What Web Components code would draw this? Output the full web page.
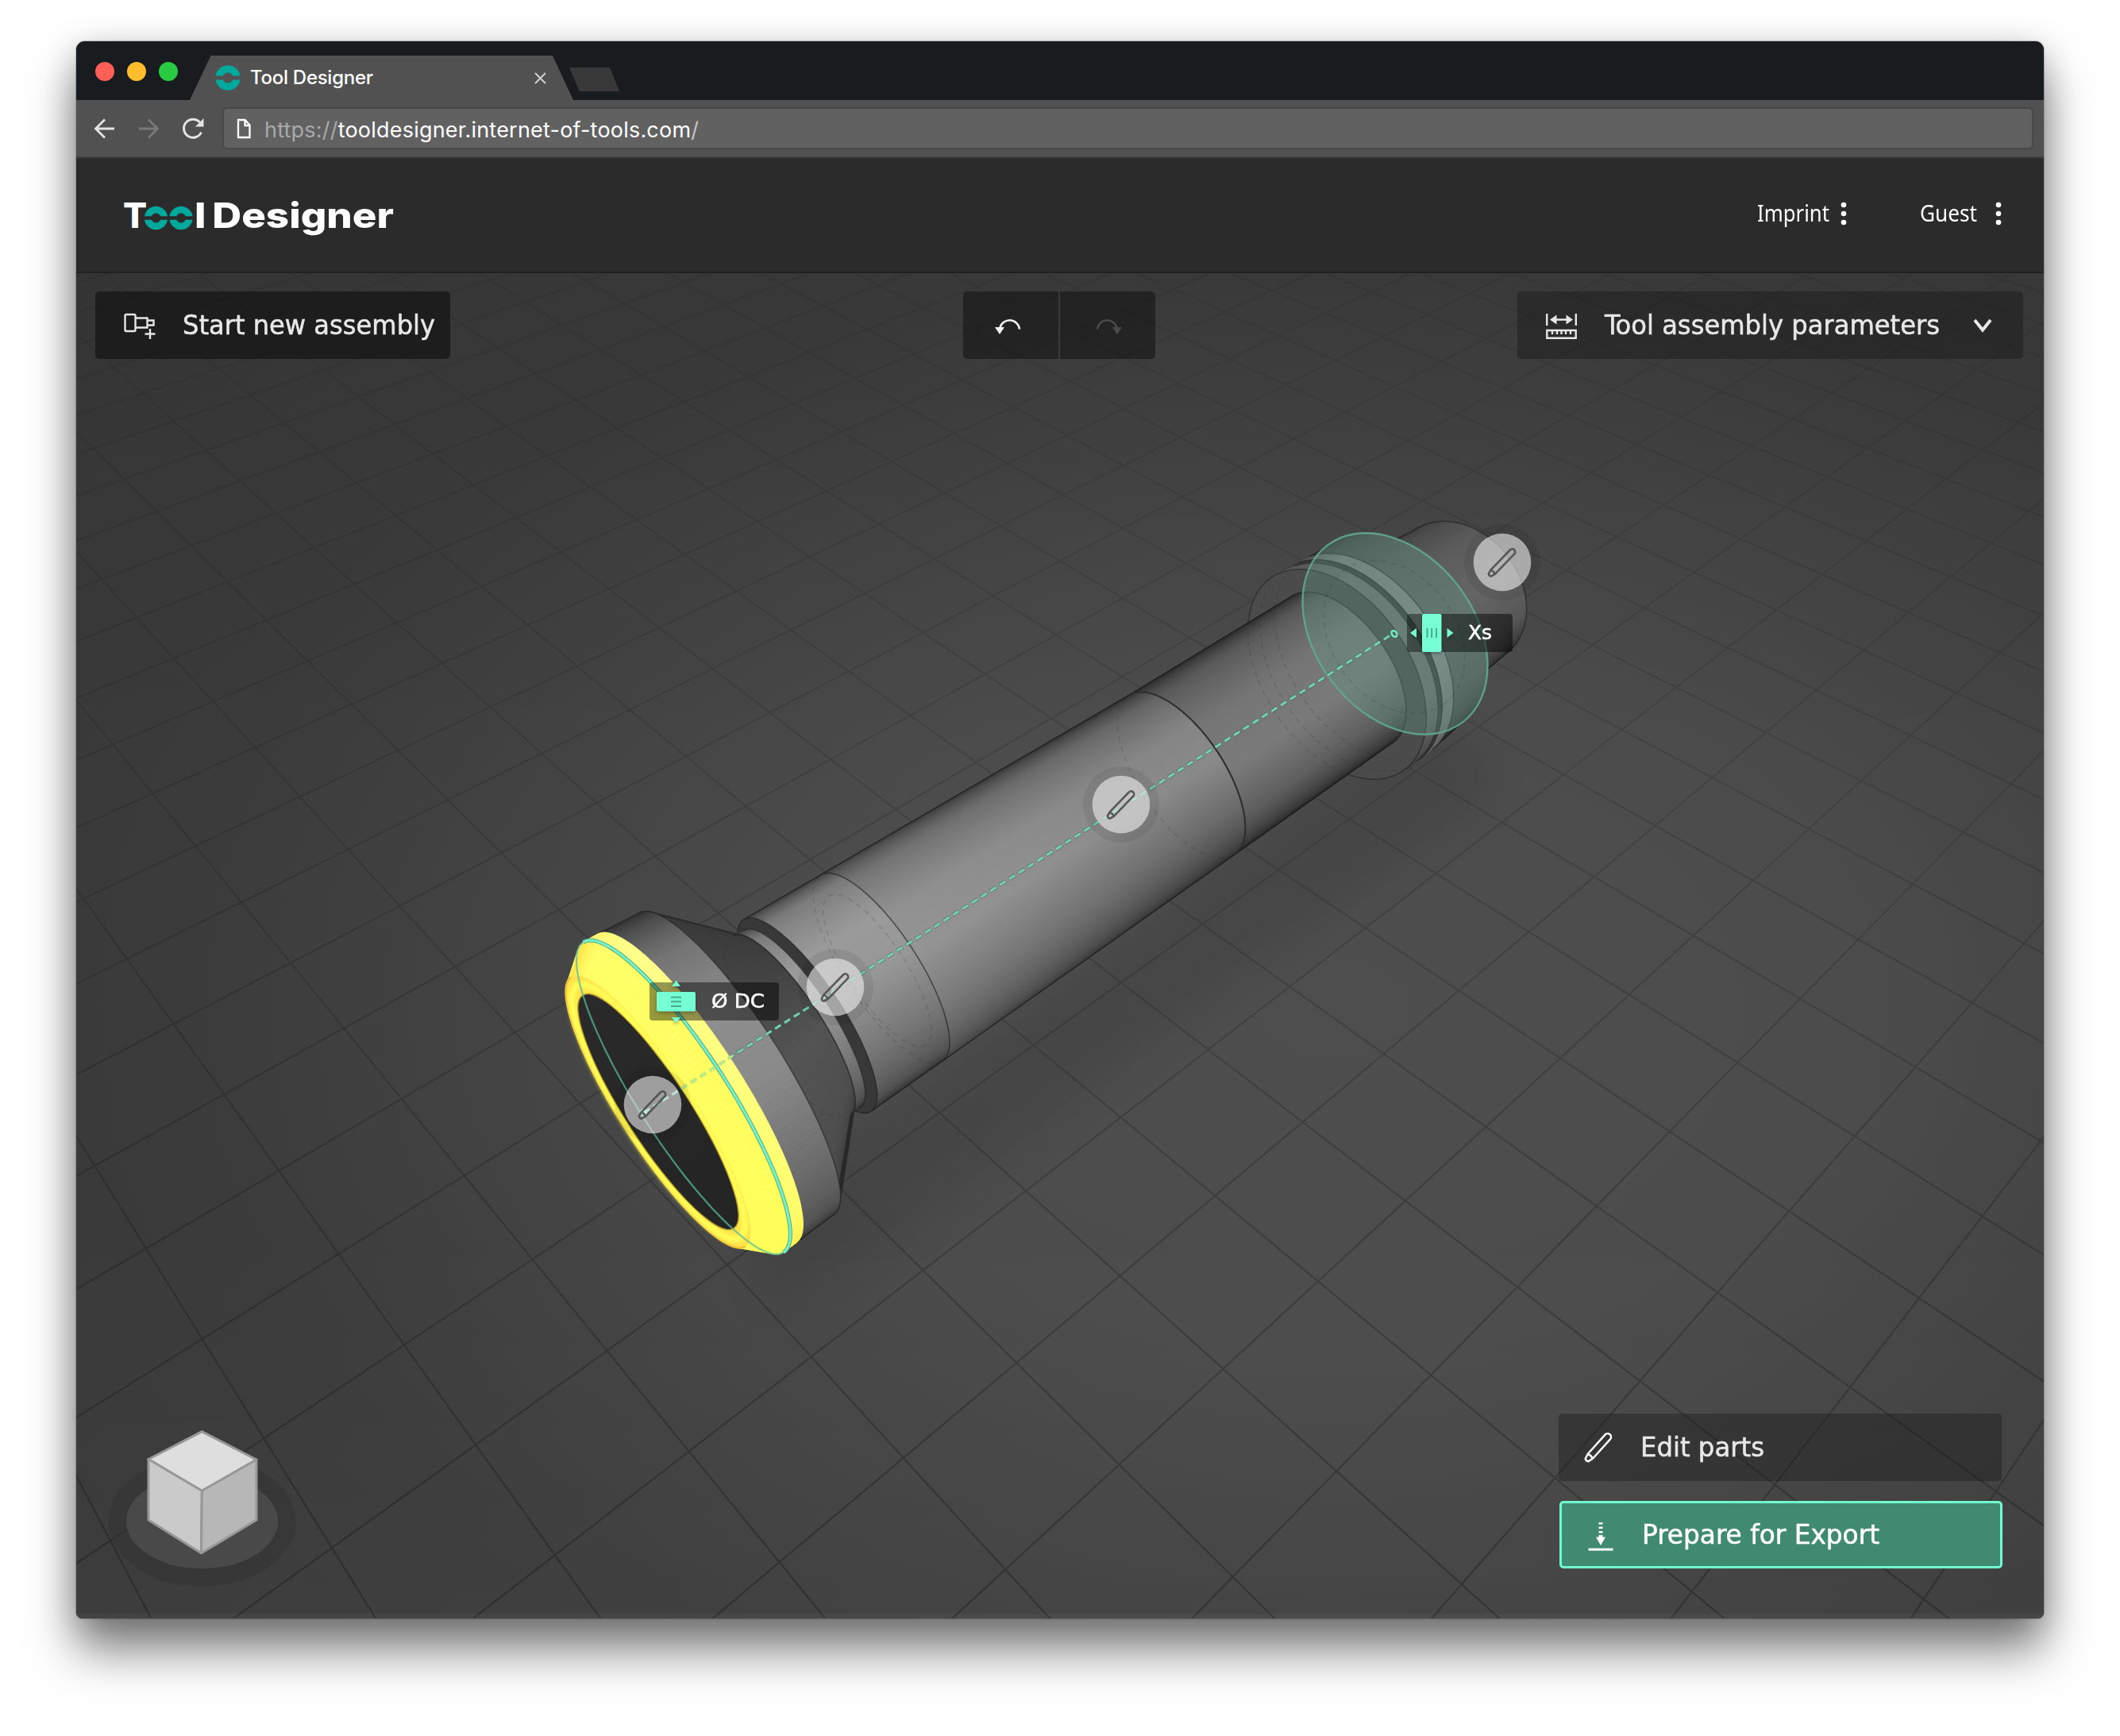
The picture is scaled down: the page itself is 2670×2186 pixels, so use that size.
<!DOCTYPE html>
<html lang="en">
<head>
<meta charset="utf-8">
<title>Tool Designer</title>
<style>
html,body{margin:0;height:100%}
body{background:#fff;font-family:"Noto Sans","Open Sans",sans-serif;color:#fff;overflow:hidden}
app-window{width:2478px;height:1986px;margin:52px 0 0 96px}
</style>
</head>
<body>
<app-window>
  <tab-strip slot="chrome"></tab-strip>
  <address-bar slot="chrome"></address-bar>
  <app-header slot="page">
    <menu-link gap="14" w="91">Imprint</menu-link>
    <menu-link gap="23" w="72">Guest</menu-link>
  </app-header>
  <tool-viewport slot="page">
    <tool-button slot="start" icon="assembly" w="318" style="--w:447px;--bg:rgba(10,10,10,.55);--pl:36px;--gap:34px">Start new assembly</tool-button>
    <history-buttons slot="middle"></history-buttons>
    <tool-button slot="end" icon="params" w="422" chevron style="--w:637px;--bg:rgba(18,18,18,.38);--pl:36px;--gap:35px">Tool assembly parameters</tool-button>
    <tool-button slot="actions" icon="pencil" w="156" style="--w:558px;--bg:rgba(24,24,24,.38);--pl:31px;--gap:32px">Edit parts</tool-button>
    <tool-button slot="actions" icon="export" w="299" primary style="--w:558px;--bg:#3f8a71;--pl:32px;--gap:32px">Prepare for Export</tool-button>
    <view-cube slot="cube"></view-cube>
    <part-marker slot="free" x="1892" y="708"></part-marker>
    <part-marker slot="free" x="1412" y="1013"></part-marker>
    <part-marker slot="free" x="1051.5" y="1243"></part-marker>
    <part-marker slot="free" x="822" y="1391"></part-marker>
    <drag-chip slot="free" x="818" y="1237" dir="v" w="67">Ø DC</drag-chip>
    <drag-chip slot="free" x="1772" y="773" dir="h" w="30">Xs</drag-chip>
  </tool-viewport>
</app-window>

<script>
const define = (name, html, setup) => customElements.define(name, class extends HTMLElement {
  constructor() {
    super();
    this.attachShadow({ mode: 'open' }).innerHTML = html;
  }
  connectedCallback() { if (setup) setup(this, this.shadowRoot); }
});

/* Fits a single line of text to a given width, by tracking or (with "scale") by widening the glyphs. */
define('fit-label', `<style>:host{display:inline-block;white-space:nowrap;line-height:1}span{display:inline-block}</style><span><slot></slot></span>`,
  (el, root) => {
    const span = root.querySelector('span');
    const target = +el.getAttribute('w');
    const width = span.getBoundingClientRect().width;
    if (el.hasAttribute('scale')) {
      span.style.transformOrigin = '0 50%';
      span.style.transform = `scaleX(${(target / width).toFixed(4)})`;
      el.style.width = target + 'px';
      return;
    }
    const n = el.textContent.trim().length;
    const delta = (target - width) / (n - 1);
    span.style.letterSpacing = delta.toFixed(3) + 'px';
    span.style.marginRight = (-delta).toFixed(3) + 'px';
  });

const makeLabel = el => {
  const label = document.createElement('fit-label');
  label.setAttribute('w', el.getAttribute('w'));
  label.setAttribute('scale', '');
  label.textContent = el.textContent.trim();
  return label;
};

/* Two half rings split by a horizontal gap. */
const ringGlyph = (cx, cy, r, hole, gap) => {
  const a = Math.sqrt(r * r - gap * gap), b = Math.sqrt(hole * hole - gap * gap);
  return `<path fill="#00a99b" d="M${cx - a} ${cy - gap}A${r} ${r} 0 0 1 ${cx + a} ${cy - gap}H${cx + b}A${hole} ${hole} 0 0 0 ${cx - b} ${cy - gap}Z
  M${cx - a} ${cy + gap}A${r} ${r} 0 0 0 ${cx + a} ${cy + gap}H${cx + b}A${hole} ${hole} 0 0 1 ${cx - b} ${cy + gap}Z"/>`;
};

define('app-window', `<style>
:host{display:flex;flex-direction:column;border-radius:11px 11px 8px 8px;box-shadow:0 40px 60px rgba(0,0,0,.5),0 6px 40px rgba(0,0,0,.18),0 0 2px rgba(0,0,0,.6)}
main{display:flex;flex-direction:column;flex:1;border-radius:11px 11px 8px 8px;overflow:hidden;background:#2b2b2b}
</style><main><slot name="chrome"></slot><slot name="page"></slot></main>`);

define('tab-strip', `<style>
:host{display:flex;height:74px;background:#181c1f;font:500 24px Inter,Roboto,sans-serif;color:#fff}
.lights{display:flex;gap:16px;padding:26px 0 0 24px;width:119px}
.lights i{width:24px;height:24px;border-radius:50%}
.tab{display:flex;align-items:center;width:483px;height:56px;margin-top:18px;box-sizing:border-box;padding-left:32px;background:#515151;clip-path:polygon(5.5% 0,94.6% 0,100% 100%,0 100%)}
.tab svg{flex:none}
fit-label{margin-left:12px;flex:1}
.x{margin-right:34px}
.new{width:63px;height:30px;margin:33px 0 0 -5px;background:#383838;clip-path:polygon(0 0,81% 0,100% 100%,20% 100%)}
</style>
<div class="lights"><i style="background:#ff5f57"></i><i style="background:#ffbd2e"></i><i style="background:#28ca42"></i></div>
<div class="tab"><svg width="32" height="34" viewBox="0 0 32 34">${ringGlyph(16, 17, 15.8, 6.5, 2.6)}</svg><fit-label w="155">Tool Designer</fit-label>
<svg class="x" width="15" height="15" viewBox="0 0 15 15"><path d="M1 1L14 14M14 1L1 14" stroke="#d0d0d0" stroke-width="2"/></svg></div>
<div class="new"></div>`);

define('address-bar', `<style>
:host{display:flex;align-items:center;height:73px;background:#515151;box-sizing:border-box;padding:0 13px 0 22px;border-bottom:2px solid #3f3f3f;font:400 27px Inter,Roboto,sans-serif}
.nav{display:flex;gap:28.5px;width:162px;align-items:center}
.field{flex:1;height:53px;box-sizing:border-box;border:2px solid #474747;border-radius:6px;background:#616161;display:flex;align-items:center;padding-left:16px;gap:17px;color:#fff}
.dim{color:#a9a9a9}
fit-label{margin-top:3px}
</style>
<div class="nav">
<svg width="27" height="28" viewBox="0 0 27 28" fill="none" stroke="#e4e4e4" stroke-width="2.8"><path d="M26 14H3M14 2.5L2.5 14L14 25.500"/></svg>
<svg width="27" height="28" viewBox="0 0 27 28" fill="none" stroke="#797979" stroke-width="2.800"><path d="M1 14H24M13 2.500L24.500 14L13 25.500"/></svg>
<svg width="28" height="28" viewBox="0 0 28 28"><path d="M24.500 18.500A11.500 11.500 0 1 1 22.500 6" fill="none" stroke="#e4e4e4" stroke-width="3"/><path d="M27.500 1V11.500H17Z" fill="#e4e4e4"/></svg>
</div>
<div class="field"><svg width="18" height="26" viewBox="0 0 18 26" fill="none" stroke="#fff" stroke-width="2.300"><path d="M2 2H10.500L16.500 8.500V24H2ZM10.500 2V9H16.500"/></svg>
<fit-label w="547"><span class="dim">https://</span>tooldesigner.internet-of-tools.com<span class="dim" style="color:#c4c4c4">/</span></fit-label></div>`);

define('app-header', `<style>
:host{display:flex;height:145px;box-sizing:border-box;background:#2b2b2b;border-bottom:2px solid #202020;justify-content:space-between;padding:0 53px 0 59px}
.logo{display:flex;align-items:center;height:144px;font:800 44.500px Inter,"Open Sans",sans-serif;color:#fff}
.logo svg{margin:7px 2px 0 -3px}
.logo fit-label{word-spacing:-3px}
nav{display:flex;gap:92px;height:139px;align-items:center}
</style>
<div class="logo"><span>T</span><svg width="61" height="31" viewBox="0 0 61 31">${ringGlyph(14.5, 15.500, 14.700, 6, 2.300)}${ringGlyph(46, 15.500, 14.700, 6, 2.300)}</svg><fit-label w="251" scale>l Designer</fit-label></div>
<nav><slot></slot></nav>`);

define('menu-link', `<style>:host{display:flex;align-items:center;font-size:28.500px;color:#fff}</style>
<svg width="8" height="30" viewBox="0 0 8 30" fill="#fff"><circle cx="4" cy="4" r="3.300"/><circle cx="4" cy="15" r="3.300"/><circle cx="4" cy="26" r="3.300"/></svg>`,
  (el, root) => {
    const dots = root.querySelector('svg');
    dots.before(makeLabel(el));
    dots.style.marginLeft = el.getAttribute('gap') + 'px';
  });

const icons = {
  assembly: `<svg width="40" height="34" viewBox="0 0 40 34" fill="none" stroke="#e6e6e6" stroke-width="2.400"><rect x="1.500" y="2" width="13" height="21" rx="1.500"/><path d="M14.500 6.500H29.500V18.500H14.500M29.500 9.500H37.500V15.500H29.500M33 20V33M26.500 26.500H39.500"/></svg>`,
  params: `<svg width="39" height="34" viewBox="0 0 39 34" fill="none" stroke="#e6e6e6" stroke-width="2.400"><path d="M1.200 1V16M37.800 1V16M10 8.500H29"/><path d="M5 8.500L13.500 2.500V14.500ZM34 8.500L25.500 2.500V14.500Z" fill="#e6e6e6" stroke="none"/><path d="M1.300 22H37.700V31.700H1.300ZM8 22V27M14 22V27M19.500 22V27M25 22V27M31 22V27"/></svg>`,
  pencil: `<svg width="40" height="40" viewBox="-20 -20 40 40" fill="none" stroke="#fff" stroke-width="2.500" stroke-linejoin="round"><g transform="translate(-1 -1.500) rotate(-48)"><path d="M-21.500 -2.500L-15 -4.300H17.500A4.300 4.300 0 0 1 17.500 4.300H-15L-21.500 2.500Q-23.500 0 -21.500 -2.500ZM-15 -4.300Q-13.500 0 -15 4.300"/></g></svg>`,
  export: `<svg width="40" height="40" viewBox="0 0 40 40"><g fill="#fff"><path d="M17.500 3h5v2.600h-5zM17.500 8.500h5v2.600h-5zM17.500 14h5v2.600h-5zM17.500 19h5v2.500H26L20 32L14 21.500h3.500z"/><path d="M4.500 38.600v-3h31v3z"/></g></svg>`
};

define('tool-button', `<style>
:host{display:flex;align-items:center;box-sizing:border-box;width:var(--w);height:85px;border-radius:5px;background:var(--bg);padding-left:var(--pl);gap:var(--gap);font:34.500px "DejaVu Sans Condensed","DejaVu Sans","Noto Sans",sans-serif;font-stretch:condensed;color:#e8e8e8;-webkit-text-stroke:.5px currentColor}
:host([primary]){border:3px solid #70fbd0;color:#fff;margin-left:1px;padding-left:29px}
.icon{display:flex;margin-top:2px}
.chev{margin-left:7px}
</style><div class="icon"></div>`,
  (el, root) => {
    root.querySelector('.icon').innerHTML = icons[el.getAttribute('icon')];
    const label = makeLabel(el);
    root.appendChild(label);
    if (el.hasAttribute('chevron')) label.insertAdjacentHTML('afterend', `<svg class="chev" width="24" height="20" viewBox="0 0 24 20"><path d="M2 3L12 15.500L22 3" fill="none" stroke="#e8e8e8" stroke-width="4"/></svg>`);
  });

define('history-buttons', `<style>
:host{display:flex;gap:2px}
div{width:120px;height:85px;background:rgba(12,12,12,.5);display:flex;align-items:center;justify-content:center}
.u{border-radius:5px 0 0 5px}.r{border-radius:0 5px 5px 0}
.u svg{margin-right:7px}.r svg{margin-left:2px}
</style>
<div class="u"><svg width="34" height="22" viewBox="0 0 34 22"><path d="M6.500 13.500A12.500 12.500 0 0 1 31 15.500" fill="none" stroke="#f0f0f0" stroke-width="2.600"/><path d="M0 13H12L6 22Z" fill="#f0f0f0"/></svg></div>
<div class="r"><svg width="34" height="22" viewBox="0 0 34 22"><path d="M27.500 13.500A12.500 12.500 0 0 0 3 15.500" fill="none" stroke="#4a4a4a" stroke-width="2.600"/><path d="M34 13H22L28 22Z" fill="#4a4a4a"/></svg></div>`);

define('view-cube', `<style>:host{display:block}svg{display:block}</style>
<svg width="240" height="220" viewBox="134 1790 240 220">
<ellipse cx="254.500" cy="1915.700" rx="118" ry="82" fill="#323232" opacity=".5"/>
<ellipse cx="254.500" cy="1915.700" rx="95.500" ry="59.500" fill="#494949"/>
<g stroke="#989898" stroke-width="3" stroke-linejoin="round">
<path d="M254.300 1802.700L323 1838L254.300 1877.300L187 1837.500Z" fill="#dedede"/>
<path d="M187 1837.500L254.300 1877.300L253.500 1955.700L187 1914Z" fill="#cacaca"/>
<path d="M323 1838L254.300 1877.300L253.500 1955.700L323 1914Z" fill="#b7b7b7"/></g></svg>`);

const ORIGIN = { x: 96, y: 344 };

define('part-marker', `<style>:host{display:block;position:absolute;width:96px;height:96px}svg{display:block}</style>
<svg width="96" height="96" viewBox="-48 -48 96 96"><circle r="48" fill="rgba(0,0,0,.07)"/><circle r="36.300" fill="rgba(240,240,240,.6)"/>
<g transform="rotate(-46)" fill="none" stroke="#4c4c4c" stroke-opacity=".9" stroke-width="2.600" stroke-linejoin="round"><path d="M-22.500 -2.200L-17 -3.700H18A3.700 3.700 0 0 1 18 3.700H-17L-22.500 2.200Q-24 0 -22.500 -2.200ZM-17 -3.700Q-15.500 0 -17 3.700"/></g></svg>`,
  el => {
    el.style.left = (el.getAttribute('x') - ORIGIN.x - 48) + 'px';
    el.style.top = (el.getAttribute('y') - ORIGIN.y - 48) + 'px';
  });

define('drag-chip', `<style>
:host{display:flex;position:absolute;align-items:center;height:48px;border-radius:4px;background:linear-gradient(90deg,rgba(0,0,0,.4),rgba(0,0,0,.5));font:25.500px "DejaVu Sans Condensed","DejaVu Sans","Noto Sans",sans-serif;font-stretch:condensed;color:#fff;-webkit-text-stroke:.5px #fff}
svg{display:block;flex:none;overflow:visible;-webkit-text-stroke:0}
:host([dir=v]){width:163px}:host([dir=v]) svg{margin:0 20px 0 9px}
:host([dir=h]){width:133px}:host([dir=h]) svg{margin:0 19px 0 4px}
.h,.v{filter:drop-shadow(0 2px 2px rgba(0,0,0,.3))}
:host([dir=v]) .h,:host([dir=h]) .v{display:none}
</style>
<svg class="v" width="49" height="48" viewBox="0 0 49 48"><g fill="#76ffd3"><rect y="12" width="49" height="24.500" rx="2"/><path d="M24.500 -2.500L30 5H19ZM24.500 51.500L30 44H19Z"/></g><path d="M18 18.700H31M18 24.300H31M18 30H31" stroke="#45a98b" stroke-width="2"/></svg>
<svg class="h" width="54" height="48" viewBox="0 0 54 48"><g fill="#76ffd3"><rect x="15" width="24.500" height="48" rx="2"/><path d="M0 24L8 18V30ZM54.500 24L46.500 18V30Z"/></g><path d="M21.500 18V30M27.200 18V30M33 18V30" stroke="#45a98b" stroke-width="2"/></svg>`,
  (el, root) => {
    el.style.left = (el.getAttribute('x') - ORIGIN.x) + 'px';
    el.style.top = (el.getAttribute('y') - ORIGIN.y) + 'px';
    root.appendChild(makeLabel(el));
  });

/* ---- 3D scene ---- */
const rim = (cx, cy, rx, ry, rot) => ({ cx, cy, rx, ry, rot });
const at = (e, deg) => {
  const r = e.rot * Math.PI / 180, t = deg * Math.PI / 180;
  const a = e.rx * Math.cos(t), b = e.ry * Math.sin(t);
  return [e.cx + a * Math.cos(r) - b * Math.sin(r), e.cy + a * Math.sin(r) + b * Math.cos(r)].map(v => +v.toFixed(1));
};
const pick = (stops, t) => {
  let i = 1;
  while (i < stops.length - 1 && stops[i][0] < t) i++;
  const [t0, c0] = stops[i - 1], [t1, c1] = stops[i];
  const k = Math.min(1, Math.max(0, (t - t0) / (t1 - t0)));
  const mix = [0, 1, 2].map(n => Math.round(c0[n] + (c1[n] - c0[n]) * k));
  return `rgb(${mix})`;
};
const grey = pairs => pairs.map(([t, v]) => [t, [v, v, v]]);
/* Band between two rims; the hidden half is painted before the visible one. */
const loft = (a, b, stops) => {
  let out = '';
  const quad = (d0, d1, c) => {
    const p = [at(a, d0), at(a, d1), at(b, d1), at(b, d0)];
    out += `<path d="M${p.join('L')}Z" fill="${c}" stroke="${c}" stroke-width=".8"/>`;
  };
  for (let d = 0; d < 180; d += 6) quad(d, d + 6, pick(stops, 1 - d / 180));
  for (let d = 180; d < 360; d += 2) quad(d, d + 2, pick(stops, (d - 179) / 180));
  return out;
};
const ell = (e, attrs) => `<ellipse rx="${e.rx}" ry="${e.ry}" transform="translate(${e.cx} ${e.cy}) rotate(${e.rot})" ${attrs}/>`;
const arc = (e, d0, d1, attrs) => {
  const pts = [];
  for (let d = d0; d <= d1; d += 3) pts.push(at(e, d));
  return `<path d="M${pts.join('L')}" fill="none" ${attrs}/>`;
};
const edge = (a, b, deg, attrs = 'stroke="#1c1c1c" stroke-opacity=".5" stroke-width="1.600"') => `<path d="M${at(a, deg)}L${at(b, deg)}" ${attrs}/>`;

function gridLines() {
  let d = '';
  const y0 = 340, y1 = 2040;
  const family = (vx, vy, base, step) => {
    for (let i = -30; i < 34; i++) {
      const bx = base + step * i;
      const f = y => vx + (bx - vx) * (y - vy) / (2032 - vy);
      d += `M${f(y0).toFixed(1)} ${y0}L${f(y1).toFixed(1)} ${y1}`;
    }
  };
  family(-1334, -872, 187.1, 282.45);
  family(4356, -871, 302.2, 301.2);
  return d;
}

function toolModel() {
  const hole = rim(829, 1400, 174.3, 39.6, 57.05), lip = rim(829, 1400, 202, 46.5, 57.1),
    dc = rim(860.7, 1381.7, 232.5, 56.2, 57.15), y2 = rim(877.7, 1370.5, 231, 56, 57.15),
    g1 = rim(928, 1339.3, 225.7, 54, 57.1), c1 = rim(996.7, 1291.3, 135, 37, 56.6),
    k0 = rim(1010, 1283, 133.5, 37, 56.6), k1 = rim(1016.7, 1278.7, 145, 42.7, 56.3),
    j1 = rim(1110, 1219, 140, 46, 56.7), e2 = rim(1488, 976, 120.4, 54, 56.4),
    e3 = rim(1690, 843.3, 112, 59.7, 54.7), f1 = rim(1684, 849, 147.3, 91.8, 55.8),
    r2 = rim(1699, 840, 146, 92, 55.5), r3 = rim(1704, 836, 146, 92, 55.5), r4 = rim(1718, 827, 145, 93, 55),
    m2 = rim(1762, 796, 138, 93, 53.5), t0 = rim(1745, 807, 110, 78, 54), t1 = rim(1838, 746, 97, 76, 52);
  const body = grey([[0, 34], [.07, 56], [.2, 102], [.38, 134], [.52, 138], [.7, 108], [.86, 74], [1, 42]]);
  const bright = grey([[0, 40], [.06, 72], [.18, 124], [.36, 154], [.5, 152], [.7, 118], [.88, 82], [1, 44]]);
  const far = grey([[0, 32], [.06, 48], [.2, 90], [.4, 118], [.58, 122], [.76, 94], [.9, 60], [1, 34]]);
  const tail = grey([[0, 42], [.15, 72], [.35, 92], [.55, 102], [.75, 88], [.92, 56], [1, 34]]);
  const dark = 'stroke="#222" stroke-opacity=".65" stroke-width="1.600"';
  const hid = 'stroke="#222" stroke-opacity=".17" stroke-width="1.500" stroke-dasharray="7 6"';
  let s = '';
  s += loft(t0, t1, tail) + arc(t1, 180, 362, dark) + edge(t0, t1, 180) + edge(t0, t1, 0);
  s += loft(r4, m2, tail) + edge(r4, m2, 0);
  s += loft(r3, r4, grey([[0, 60], [.2, 125], [.6, 140], [.8, 118], [1, 90]])) + arc(r4, 190, 360, dark);
  s += loft(r2, r3, grey([[0, 60], [1, 62]])) + arc(r3, 190, 360, dark);
  s += loft(f1, r2, grey([[0, 76], [.3, 112], [.7, 112], [.9, 80], [1, 60]])) + arc(r2, 190, 360, dark);
  s += ell(f1, 'fill="url(#flange)" stroke="#222" stroke-opacity=".6" stroke-width="1.600"');
  s += loft(e2, e3, far) + arc(e3, 180, 360, dark) + edge(e2, e3, 180) + edge(e2, e3, 0);
  s += loft(j1, e2, body);
  s += `<path fill="url(#sheen)" d="M${at(j1, 180)}L${at(e2, 180)}L${at(e2, 270)}L${at(e2, 0)}L${at(j1, 0)}L${at(j1, 90)}Z"/>`;
  s += arc(e2, 180, 360, 'stroke="#2c2c2c" stroke-width="2"') + edge(j1, e2, 180) + edge(j1, e2, 0);
  s += arc(e2, 0, 180, hid);
  [f1, r2, r4].forEach(e => s += arc(e, 15, 165, hid));
  s += loft(k1, j1, bright) + arc(j1, 180, 360, dark) + arc(j1, 0, 180, hid) + edge(k1, j1, 180) + edge(k1, j1, 0);
  s += arc(rim(1105, 1222, 112, 36, 57), 0, 360, hid);
  s += ell(k1, 'fill="url(#collar)" stroke="#222" stroke-opacity=".7" stroke-width="1.600"');
  s += loft(c1, k0, bright) + arc(k0, 180, 360, dark);
  s += loft(g1, c1, grey([[0, 44], [.1, 56], [.35, 66], [.55, 84], [.75, 78], [.9, 58], [1, 42]])) + arc(c1, 180, 360, dark);
  s += edge(g1, c1, 189) + edge(g1, c1, -7);
  s += arc(rim(990, 1296, 130, 36, 56.6), 0, 180, hid);
  s += loft(y2, g1, grey([[0, 46], [.08, 62], [.25, 116], [.42, 142], [.55, 138], [.75, 108], [.9, 84], [.97, 60], [1, 46]])) + arc(g1, 180, 360, dark);
  s += edge(y2, g1, 180) + edge(y2, g1, 0);
  const Y = (...a) => a;
  s += loft(dc, y2, [[0, Y(255, 248, 110)], [.2, Y(255, 255, 138)], [.5, Y(255, 255, 128)], [.8, Y(255, 255, 108)], [1, Y(255, 240, 80)]]);
  s += loft(lip, dc, [[0, Y(255, 226, 72)], [.1, Y(255, 255, 104)], [.5, Y(255, 255, 98)], [1, Y(255, 255, 88)]]);
  s += ell(lip, 'fill="url(#lip)"') + arc(lip, 0, 180, 'stroke="#f2c233" stroke-width="2.500"');
  s += ell(rim(829, 1400, 189, 43, 57.1), 'fill="none" stroke="#ffff58" stroke-width="8" filter="url(#soft)"');
  s += ell(hole, 'fill="#262626" stroke="#b49a26" stroke-width="2.500"') + ell(hole, 'fill="url(#holefill)"');
  s += arc(dc, 0, 180, 'stroke="#58b89a" stroke-opacity=".75" stroke-width="2.200"');
  s += arc(dc, 180, 360, 'stroke="#5aa884" stroke-width="5"') + arc(dc, 180, 360, 'stroke="#72f3c8" stroke-width="3"');
  /* cutting plane */
  s += ell(rim(1757, 798, 140.2, 99.8, 52.4), 'fill="rgba(94,150,130,.36)" stroke="#62a88f" stroke-opacity=".9" stroke-width="2.400"');
  s += ell(rim(1756, 802, 105, 78, 53), 'fill="none" stroke="#222" stroke-opacity=".16" stroke-width="1.500" stroke-dasharray="7 6"');
  /* axis */
  const axis = 'M811 1401L1754 798';
  s += `<path d="${axis}" stroke="url(#axisShade)" stroke-width="5" stroke-dasharray="9.600 4.400" stroke-dashoffset=".5"/><path d="${axis}" stroke="url(#axisTint)" stroke-width="3" stroke-dasharray="8.600 5.400"/>`;
  s += ell(rim(1756, 798, 4.200, 3, 55), 'fill="none" stroke="#70f0c6" stroke-width="2.400"');
  s += ell(rim(811, 1401, 4.200, 3, 55), 'fill="none" stroke="#70f0c6" stroke-width="2.400"');
  return s;
}

define('tool-scene', `<style>:host{display:block;position:absolute;inset:0}svg{display:block}</style>
<svg width="2478" height="1695" viewBox="96 344 2478 1695">
<defs>
<radialGradient id="bg" gradientUnits="userSpaceOnUse" cx="0" cy="0" r="1" gradientTransform="translate(1680 1270) scale(2200 1420)">
<stop offset="0" stop-color="#4e4e4e"/><stop offset=".3" stop-color="#4c4c4c"/><stop offset=".47" stop-color="#444"/><stop offset=".66" stop-color="#3b3b3b"/><stop offset="1" stop-color="#363636"/></radialGradient>
<linearGradient id="low" x1="0" y1="0" x2="0" y2="1"><stop offset="0" stop-color="#000" stop-opacity=".04"/><stop offset=".4" stop-color="#000" stop-opacity="0"/><stop offset=".7" stop-color="#fff" stop-opacity="0"/><stop offset="1" stop-color="#fff" stop-opacity=".025"/></linearGradient>
<linearGradient id="ln" gradientUnits="userSpaceOnUse" x1="0" y1="343" x2="0" y2="2038"><stop offset="0" stop-color="#000" stop-opacity=".07"/><stop offset=".35" stop-color="#000" stop-opacity=".12"/><stop offset=".7" stop-color="#000" stop-opacity=".2"/><stop offset="1" stop-color="#000" stop-opacity=".26"/></linearGradient>
<linearGradient id="flange" gradientUnits="userSpaceOnUse" x1="1570" y1="780" x2="1790" y2="930"><stop offset="0" stop-color="#4b4b4b"/><stop offset=".6" stop-color="#555"/><stop offset="1" stop-color="#5e5e5e"/></linearGradient>
<linearGradient id="collar" gradientUnits="userSpaceOnUse" x1="940" y1="1160" x2="1100" y2="1400"><stop offset="0" stop-color="#383838"/><stop offset=".6" stop-color="#4c4c4c"/><stop offset="1" stop-color="#454545"/></linearGradient>
<linearGradient id="sheen" gradientUnits="userSpaceOnUse" x1="1080" y1="1230" x2="1480" y2="975"><stop offset="0" stop-color="#fff" stop-opacity=".11"/><stop offset="1" stop-color="#fff" stop-opacity="0"/></linearGradient>
<linearGradient id="lip" gradientUnits="userSpaceOnUse" x1="730" y1="1240" x2="925" y2="1560"><stop offset="0" stop-color="#ffe24a"/><stop offset=".2" stop-color="#fff855"/><stop offset=".8" stop-color="#ffff5a"/><stop offset="1" stop-color="#ffdf4c"/></linearGradient>
<linearGradient id="holefill" x1="0" y1="0" x2="1" y2="0"><stop offset="0" stop-color="#2a2a2a"/><stop offset="1" stop-color="#242424"/></linearGradient>
<linearGradient id="axisTint" gradientUnits="userSpaceOnUse" x1="811" y1="0" x2="1754" y2="0"><stop offset=".045" stop-color="#78dcb8"/><stop offset=".046" stop-color="#b4ea8e"/><stop offset=".118" stop-color="#b4ea8e"/><stop offset=".119" stop-color="#74d0ae"/><stop offset="1" stop-color="#74d0ae"/></linearGradient>
<linearGradient id="axisShade" gradientUnits="userSpaceOnUse" x1="811" y1="0" x2="1754" y2="0"><stop offset=".118" stop-color="#2e5a4b" stop-opacity=".12"/><stop offset=".119" stop-color="#2e5a4b" stop-opacity=".4"/></linearGradient>
<filter id="soft" x="-20%" y="-20%" width="140%" height="140%"><feGaussianBlur stdDeviation="2.500"/></filter>
<filter id="wide" x="-30%" y="-60%" width="160%" height="220%"><feGaussianBlur stdDeviation="24"/></filter>
</defs>
<rect x="96" y="343" width="2478" height="1696" fill="url(#bg)"/><rect x="96" y="343" width="2478" height="1696" fill="url(#low)"/>
<path id="grid" fill="none" stroke="url(#ln)" stroke-width="2.200"/>
<path d="M960 1640L1130 1560L1420 1330L1700 1130L1870 1010L1880 950L1780 900L1200 1350L960 1480Z" fill="#222" opacity=".15" filter="url(#wide)"/>
<g id="tool"></g>
<rect x="96" y="2032" width="2478" height="7" fill="#fff" opacity=".035"/>
</svg>`, (el, root) => {
  root.querySelector('#grid').setAttribute('d', gridLines());
  root.querySelector('#tool').innerHTML = toolModel();
});

define('tool-viewport', `<style>
:host{display:flex;flex-direction:column;position:relative;flex:1;background:#444;box-sizing:border-box;padding:23px 26px 63px 24px;justify-content:space-between}
.top{display:grid;grid-template-columns:1093px 1fr auto;position:relative;z-index:1}
.bottom{display:flex;justify-content:space-between;align-items:flex-end;position:relative;z-index:1;padding:0 26px 0 14px}
.bottom .cube{margin-bottom:-35px}
.actions{display:flex;flex-direction:column;gap:25px}
</style>
<tool-scene></tool-scene>
<slot name="free"></slot>
<div class="top"><slot name="start"></slot><slot name="middle"></slot><slot name="end"></slot></div>
<div class="bottom"><div class="cube"><slot name="cube"></slot></div><div class="actions"><slot name="actions"></slot></div></div>`);
</script>
</body>
</html>
